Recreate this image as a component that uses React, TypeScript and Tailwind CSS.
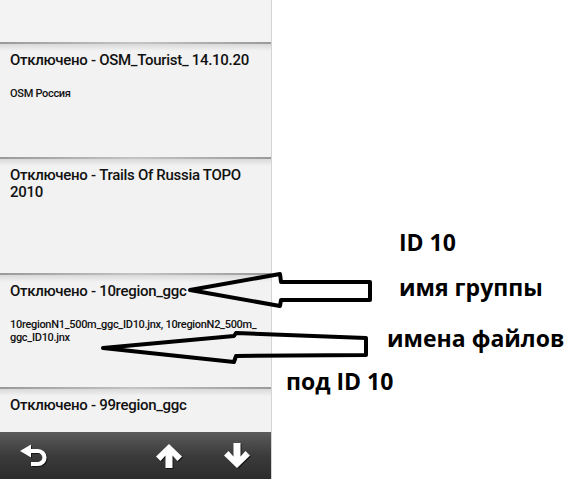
import React from 'react'

type Entry = {
  title: string[]
  files?: string[]
  height: string
}

const entries: Entry[] = [
  { title: ['Отключено - OSM_Tourist_ 14.10.20'], files: ['OSM Россия'], height: 'h-[115px]' },
  { title: ['Отключено - Trails Of Russia TOPO', '2010'], height: 'h-[116px]' },
  {
    title: ['Отключено - 10region_ggc'],
    files: ['10regionN1_500m_ggc_ID10.jnx, 10regionN2_500m_', 'ggc_ID10.jnx'],
    height: 'h-[114px]',
  },
  { title: ['Отключено - 99region_ggc'], height: 'h-[45px]' },
]

function MapRow({ entry }: { entry: Entry }) {
  return (
    <div className={`relative shrink-0 overflow-hidden bg-[#f2f2f2] ${entry.height}`}>
      {/* divider shading */}
      <div className="h-[2px] bg-gradient-to-r from-[#9a9a9a] via-[#c4c4c4] to-[#9a9a9a]" />
      <div className="h-[7px] bg-gradient-to-b from-[#d9d9d9] to-[#f2f2f2]" />
      <div className="px-[10px] pt-[1px]">
        {entry.title.map((line) => (
          <div key={line} className="text-[15px] leading-[17px] font-medium whitespace-nowrap tracking-[-0.3px] text-[#111]">
            {line}
          </div>
        ))}
        {entry.files && (
          <div className="mt-[18px]">
            {entry.files.map((line) => (
              <div key={line} className="text-[11px] leading-[13px] font-medium whitespace-nowrap tracking-[-0.3px] text-[#111]">
                {line}
              </div>
            ))}
          </div>
        )}
      </div>
    </div>
  )
}

function BackIcon() {
  return (
    <svg width="30" height="24" viewBox="0 0 30 24" className="drop-shadow-[1px_1px_0_rgba(0,0,0,0.6)]">
      <path d="M1 7 L12 0.5 L12 13.5 Z" fill="white" />
      <path d="M11 7 H19 A6.5 6.5 0 0 1 19 20 H12" fill="none" stroke="white" strokeWidth="4.2" />
    </svg>
  )
}

function UpIcon() {
  return (
    <svg width="28" height="26" viewBox="0 0 28 26" className="drop-shadow-[1px_1px_0_rgba(0,0,0,0.6)]">
      <path d="M14 1 L27 13.5 L22.5 18 L17.5 12.5 V25 H10.5 V12.5 L5.5 18 L1 13.5 Z" fill="white" />
    </svg>
  )
}

function DownIcon() {
  return (
    <svg width="28" height="27" viewBox="0 0 28 27" className="drop-shadow-[1px_1px_0_rgba(0,0,0,0.6)]">
      <path d="M14 26 L27 13.5 L22.5 9 L17.5 14.5 V1 H10.5 V14.5 L5.5 9 L1 13.5 Z" fill="white" />
    </svg>
  )
}

export default function App() {
  return (
    <div className="relative h-[494px] w-[573px] overflow-hidden bg-white" style={{ fontFamily: 'Roboto, "DejaVu Sans Condensed", sans-serif' }}>
      {/* device screen */}
      <div className="flex h-[479px] w-[272px] flex-col border-r border-[#d4d4d4]">
        <div className="h-[42px] shrink-0 bg-[#f3f3f3]" />
        {entries.map((e) => (
          <MapRow key={e.title[0]} entry={e} />
        ))}
        <div className="flex h-[47px] shrink-0 items-center bg-gradient-to-b from-[#5c5c5c] via-[#3b3b3b] to-[#2c2c2c] pr-[20px] pl-[19px]">
          <BackIcon />
          <div className="ml-auto flex items-center gap-[40px]">
            <UpIcon />
            <DownIcon />
          </div>
        </div>
      </div>

      {/* annotation arrows */}
      <svg className="pointer-events-none absolute inset-0" width="573" height="494" viewBox="0 0 573 494">
        <polygon
          points="190,290 280,274 281,282 370,282 370,300 281,300 280,306"
          fill="none"
          stroke="black"
          strokeWidth="4"
          strokeLinejoin="round"
        />
        <polygon
          points="103,348 234,336 236,333 366,338 366,355 236,356 234,362"
          fill="none"
          stroke="black"
          strokeWidth="4"
          strokeLinejoin="round"
        />
      </svg>

      <div className="absolute top-[227px] left-[399px] text-[23px] leading-[31px] font-bold text-black" style={{ fontFamily: '"Open Sans", sans-serif' }}>
        ID 10
      </div>
      <div className="absolute top-[272px] left-[399px] text-[23px] leading-[31px] font-bold text-black" style={{ fontFamily: '"Open Sans", sans-serif' }}>
        имя группы
      </div>
      <div className="absolute top-[323px] left-[387px] text-[23px] leading-[31px] font-bold text-black" style={{ fontFamily: '"Open Sans", sans-serif' }}>
        имена файлов
      </div>
      <div className="absolute top-[366px] left-[286px] text-[23px] leading-[31px] font-bold text-black" style={{ fontFamily: '"Open Sans", sans-serif' }}>
        под ID 10
      </div>
    </div>
  )
}
